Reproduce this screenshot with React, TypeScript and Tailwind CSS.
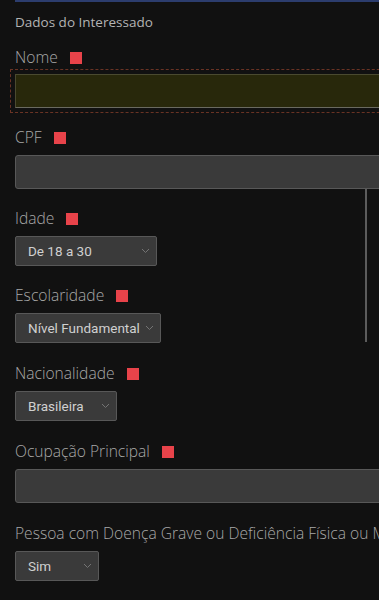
import React from "react";

const labelFont = { fontFamily: '"Open Sans", "Noto Sans", sans-serif' };

function Label({ text, req = true }: { text: string; req?: boolean }) {
  return (
    <div className="flex items-center h-5 whitespace-nowrap text-[15.6px] font-light text-[#a8a8a8]" style={labelFont}>
      <span>{text}</span>
      {req && <span className="ml-3 w-[12px] h-[12px] bg-[#e8434a] shrink-0" />}
    </div>
  );
}

function Chevron() {
  return (
    <svg width="9" height="6" viewBox="0 0 9 6" className="shrink-0">
      <path d="M1 1l3.5 3.5L8 1" fill="none" stroke="#747474" strokeWidth="1" />
    </svg>
  );
}

function Select({ value, w }: { value: string; w: string }) {
  return (
    <div
      className={`mt-[7px] h-[30px] ${w} flex items-center justify-between pl-3 pr-[6px] bg-[#3a3a3a] border border-[#585858] rounded-[2px] text-[13.5px] font-normal text-[#d0d0d0]`}
      style={{ fontFamily: "Roboto, sans-serif" }}
    >
      <span>{value}</span>
      <Chevron />
    </div>
  );
}

function TextInput() {
  return <div className="mt-[7px] h-[34px] w-[400px] bg-[#3a3a3a] border border-[#585858] rounded-[3px]" />;
}

export default function App() {
  return (
    <div className="relative w-[379px] h-[600px] overflow-hidden bg-[#111111]">
      <div className="ml-[15px] h-[2px] bg-[#2c3d6e]" />
      <div className="pl-[15px]">
        <div
          className="mt-[12px] h-4 flex items-center text-[13.5px] font-medium text-[#b4b4b4]"
          style={labelFont}
        >
          Dados do Interessado
        </div>

        <div className="mt-[18px]">
          <Label text="Nome" />
          <div className="mt-[1px] -ml-[5px] w-[410px] border border-dashed border-[#6a3324] p-[4px]">
            <div className="h-[34px] bg-[#28280b] border border-[#4a4a30] border-b-[#6a6a60]" />
          </div>
        </div>

        <div className="mt-[15px]">
          <Label text="CPF" />
          <TextInput />
        </div>

        <div className="mt-[20px]">
          <Label text="Idade" />
          <Select value="De 18 a 30" w="w-[142px]" />
        </div>

        <div className="mt-[20px]">
          <Label text="Escolaridade" />
          <Select value="Nível Fundamental" w="w-[146px]" />
        </div>

        <div className="mt-[21px]">
          <Label text="Nacionalidade" />
          <Select value="Brasileira" w="w-[102px]" />
        </div>

        <div className="mt-[21px]">
          <Label text="Ocupação Principal" />
          <TextInput />
        </div>

        <div className="mt-[21px]">
          <Label text="Pessoa com Doença Grave ou Deficiência Física ou Mental" req={false} />
          <Select value="Sim" w="w-[84px]" />
        </div>
      </div>

      <div className="absolute left-[365px] top-[189px] w-[2px] h-[153px] bg-[#5c5c5c]" />
    </div>
  );
}
